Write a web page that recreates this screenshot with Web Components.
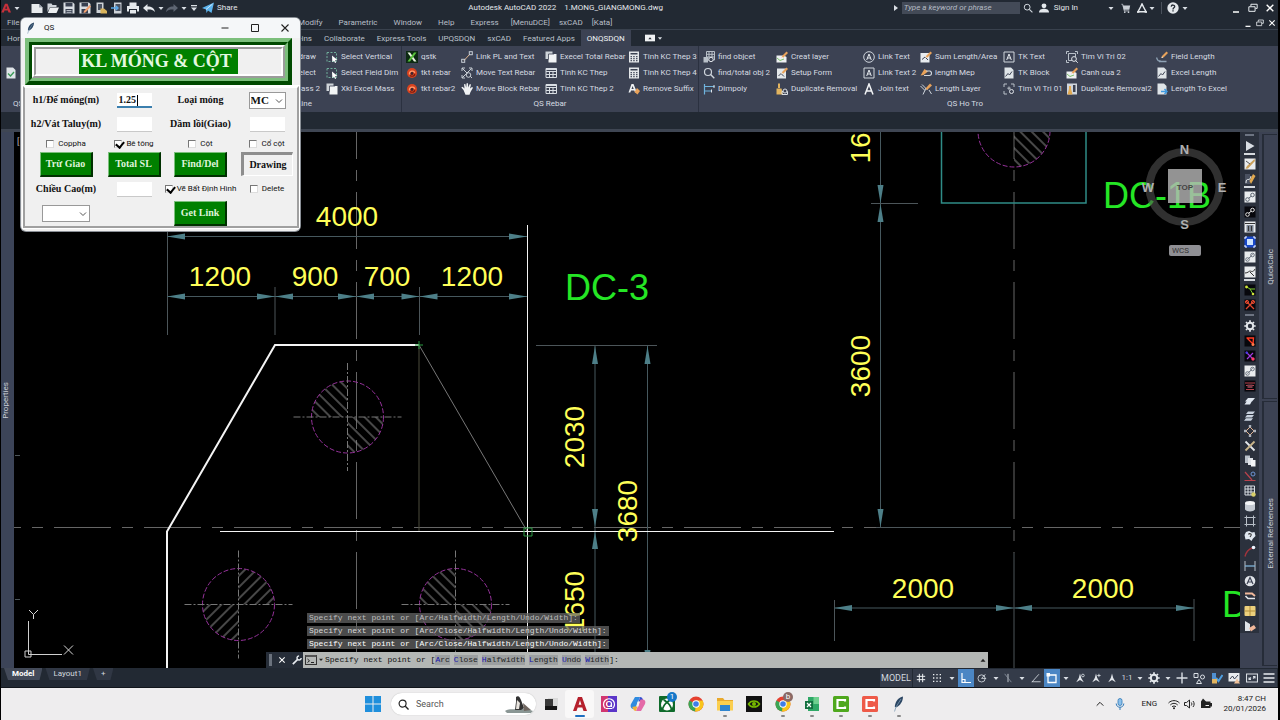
<!DOCTYPE html>
<html lang="en">
<head>
<meta charset="utf-8">
<title>Autodesk AutoCAD 2022</title>
<style>
html,body{margin:0;background:#000}
body{font-family:Roboto,"Noto Sans",sans-serif;font-size:8px;line-height:12px;color:#d3d8df}
</style>
</head>
<body>
<cad-app></cad-app>
<script>
const define = (name, css, render) => customElements.define(name, class extends HTMLElement {
  connectedCallback() {
    if (this.shadowRoot) return;
    const t = document.createElement('template');
    t.innerHTML = `<style>*{box-sizing:border-box}button,input,select{font:inherit;color:inherit;margin:0;padding:0;border:0;background:none;border-radius:0}a{color:inherit;text-decoration:none}${css}</style>${typeof render === 'function' ? render(this) : render}`;
    this.attachShadow({mode: 'open'}).append(t.content.cloneNode(true));
  }
});

/* ---------- icons, all on a 12 x 12 grid unless listed in BIG ---------- */
const L = '#d9dee4';
const st = (d, c = L, w = 1) => `<path d="${d}" fill="none" stroke="${c}" stroke-width="${w}"/>`;
const fl = (d, c = L) => `<path d="${d}" fill="${c}"/>`;
const pencil = fl('M10.500 0.500L12 2 7.500 6.500 5.500 7 6 5z', '#e8a25a') + fl('M5.500 7l.4-1.600 1.200 1.200z', '#fff');
const sheet = fl('M1.500 .5H8L10.500 3V11.500H1.500z', '#dfe4e8');
const calc = fl('M1 .5H11V11.500H1z', '#e4e7ea') + fl('M2.500 2H9.500V3.500H2.500z', '#3c4253') + [5,7,9].map(y => [2.5,5.2,8].map(x => fl(`M${x} ${y}h1.500v1.200h-1.500z`, '#4a5060')).join('')).join('');
const table = st('M1 1.500H11.500V10.500H1zM1 4.500H11.500M1 7.500H11.500M4.500 4V10.500M8 4V10.500') + fl('M1 1.500H11.500V3H1z');
const copy = fl('M.5 .5H7.500V8H.5z', '#cfd4d9') + fl('M3.500 3H11.500V11.500H3.500z', '#f2f4f5') + st('M3.500 8.500V3H9', '#3c4253', .8);
const dashSel = st('M1 1.500H10.500V10.500H1z', '#6fae9b').replace('/>', ' stroke-dasharray="2 1.500"/>') + fl('M6 4.500L11.500 9 9 9.200 10.200 11.500 9 12 8 9.800 6.300 11z', '#fff');
const rebar = '<circle cx="6" cy="6" r="5" fill="#d8431f"/>' + st('M3.500 7.500C3 4 8 2.800 8.800 5.800', '#ff9a6c', 1.3) + st('M4 8.500C6 10 9 9 8.700 7', '#7d1f10', 1.2) + '<circle cx="6" cy="6.500" r="1.400" fill="#3c2430"/>';
const tileW = '<rect x=".5" y=".5" width="11" height="11" fill="#e9ecee"/>';
const tileK = '<rect x=".5" y=".5" width="11" height="11" fill="#07070c"/>';
const chain = c => `<circle cx="3.500" cy="8.500" r="1.800" fill="none" stroke="${c}"/><circle cx="8.500" cy="4" r="1.800" fill="none" stroke="${c}"/>` + st('M4.800 7.200L7.200 5.200', c);
const chrome = '<circle cx="8" cy="8" r="7.500" fill="#e5402f"/><path d="M8 8L1.300 4.600A7.500 7.500 0 0 0 7.400 15.500z" fill="#3aa655"/><path d="M8 8H15.500A7.500 7.500 0 0 1 7 15.400z" fill="#f8c51c"/><path d="M8 8V4.600H14.700A7.500 7.500 0 0 1 15.500 8z" fill="#f8c51c"/><circle cx="8" cy="8" r="3.700" fill="#fff"/><circle cx="8" cy="8" r="2.800" fill="#3f7de8"/>';
const camt = c => `<rect width="16" height="16" rx="1.500" fill="${c}"/>` + st('M12 5.500V4H4.500V12H12V10.500', '#fff', 2.2);
const feather = fl('M12 .5C7.500 1.500 4 5.500 3.800 11L5.500 11.300C9 9.500 12 5.500 12 .5z', '#2b4663') + st('M3.500 15.500L5 11 10 3', '#7d9ab4', .8);
const compass = fl('M6 .5L7.500 6 10.500 11 6 8.500 1.500 11 4.500 6z', '#dfe3e8');

const ICONS = {
  alogo: fl('M4.800 1H7.800L12 11.500H9L8.200 9H4.200L3.400 11.500H.3zM5 6.800H7.400L6.200 3.200z', '#c7303a'),
  caret: fl('M3.500 5H8.500L6 8z'),
  caretbar: fl('M3 3H9V4.200H3zM3 5.500H9L6 9z'),
  play: fl('M2 1L10.500 6 2 11z'),
  tri: fl('M4 3L8 6 4 9z'),
  triup: fl('M3 8H9L6 4.500z', '#222'),
  newf: fl('M.5 2H8L11.500 5.500V11H.5z', '#e8ebee') + fl('M8 2V5.500H11.500z', '#9aa1ab'),
  open: fl('M.5 1.500H4.500L5.500 3H9.500V5H3L.5 10z', '#cfd4da') + fl('M3 5.500H12L9.500 11H.8z', '#eceff1'),
  save: fl('M.5 .5H10L11.500 2V11.500H.5z', '#d8dde2') + fl('M2.500 1H9.500V4.500H2.500zM2.500 7H9.500V11.500H2.500z', '#384050') + st('M3.500 8.500H8.500M3.500 10.300H8.500', '#d8dde2', .8),
  saveas: fl('M.5 .5H10L11.500 2V11.500H.5z', '#d8dde2') + fl('M2.500 1H9V4.500H2.500zM2.500 7H9V11.500H2.500z', '#384050') + fl('M10.500 3L12 4.500 6.500 10.500 4.500 11 5 9z', '#f0a070'),
  mob: fl('M1.500 .5H8.500V11H1.500z', '#cdd2d7') + fl('M3 2H7V8H3z', '#4b5362') + fl('M5.500 6.500H9L12 9V11.500H5.500z', '#d9b45c'),
  mob2: fl('M3 .5H10.500V11.500H3z', '#cdd2d7') + fl('M4.500 2H9.500V9H4.500z', '#4b5362') + st('M0 6H7M5 4L7 6 5 8', '#5aa8e8', 1.4),
  print: fl('M2.500 .5H9.500V4H2.500zM0 4H12V9.500H10V7H2V9.500H0zM3 8H9V11.500H3z', '#e4e8ec'),
  undo: fl('M0 6L4.500 2V4.600C9 4.600 11 6 12 10 10 7.800 8 7.400 4.500 7.500V10z', '#e4e8ec'),
  redo: fl('M12 6L7.500 2V4.600C3 4.600 1 6 0 10 2 7.800 4 7.400 7.500 7.500V10z', '#5d6572'),
  plane: fl('M0 6L12 .5 9.500 11 6 8.500 4.500 11 4 7.500z', '#5db4ee') + st('M4 7.500L10.500 2', '#fff', .7),
  mag: '<circle cx="5" cy="5" r="3.500" fill="none" stroke="#cfd5dc" stroke-width="1.200"/>' + st('M7.600 7.600L11.300 11.300', '#cfd5dc', 1.4),
  person: '<circle cx="6" cy="3.400" r="2.900" fill="#e4e8ec"/>' + fl('M0 11.500C0 8 3 7 6 7S12 8 12 11.500z', '#e4e8ec'),
  cart: fl('M2 3H11L10 8H3.500z', '#c9ced5') + st('M.5 1.500H2L4 9.500H10', '#c9ced5') + '<circle cx="4.500" cy="11" r="1" fill="#c9ced5"/><circle cx="9" cy="11" r="1" fill="#c9ced5"/>',
  adsk: st('M6 1.500L1.200 10.500H10.800z', '#e4e8ec', 1.7) + fl('M6 0L8 3H4zM0 9.500L3.500 11.800H0zM12 9.500V11.800H8.500z', '#e4e8ec'),
  help: '<circle cx="6" cy="6" r="5.700" fill="#e4e8ec"/>' + st('M4.200 4.600C4.400 2.400 7.800 2.600 7.700 4.600 7.600 5.900 6 5.800 6 7.400M6 8.300V9.600', '#222933', 1.3),
  min: st('M3 10H9', '#fff', 1.5),
  rest: st('M3.500 4V1.500H11V6.500H9M1 4.500H8.500V10H1z', '#e8ecf0', 1.2),
  close: st('M2 2L10 10M10 2L2 10', '#fff', 1.6),
  ribbtn: '<rect y="2" width="12" height="8" fill="#f0f2f4"/>' + fl('M4 7.500H8L6 5z', '#222933'),
  check: sheet + st('M3 6.500L5.500 9 9 5', '#3c9a58', 1.4),
  sel: dashSel, copy, rebar, table, calc,
  qstk: '<rect width="12" height="12" fill="#0c2a12"/>' + fl('M1.500 1.500H4L10.500 10.500H8z', '#e9f5e0') + fl('M8 1.500H10.500L4 10.500H1.500z', '#59c23c'),
  link: st('M3 9.500L9 3', '#e2b78e') + '<rect x=".7" y="8.300" width="3" height="3" fill="none" stroke="#c9cfd6"/><rect x="8.300" y=".7" width="3" height="3" fill="none" stroke="#c9cfd6"/>',
  move: st('M1 1L11 11M1 11L10.500 1.500M1 4V1H4M8 1H11V4M1 8V11H4', '#c9cfd6') + '<circle cx="7.500" cy="8" r="2.300" fill="#3c4253" stroke="#c9cfd6"/>',
  hand: fl('M2.500 7L.3 4.500 1.500 3.800 3.500 5.500 3 1.300 4.300 1 5.200 4.500 5.600.3H7L7.200 4.600 8.800 1 10 1.500 9 5.500 11 4 12 4.800 9.500 9 8.500 11.800H4.500z', '#f0f2f4'),
  suffix: fl('M3.500 1H5.500L9 9.500H7L6.300 7.500H3L2.300 9.500H.5zM3.500 6H5.700L4.600 3z', '#f0f2f4') + fl('M9 5L12 8 9.500 11.500 6.500 9z', '#e8a25a'),
  findo: st('M3.500 .5H11.500V9H3.500zM3.500 3.300H11.500M3.500 6H11.500M6 .5V9M9 .5V9', '#b9c0c9') + fl('M.5 6H5V11.500H.5z', '#b9c0c9') + '<circle cx="8" cy="8.500" r="2.200" fill="#3c4253" stroke="#dfe3e8"/>',
  dimp: st('M1.500 1V11.500M1.500 3.500H11.500M1.500 8H9', '#6fb3dd', 1.2) + st('M11 2V5M8.500 6.500V9.500', '#dfe3e8'),
  layer: fl('M.5 4.500H8L10.500 6V11.500H.5z', '#eef0f2') + st('M1 7L4 9.500 8 8', '#7cc06a') + pencil,
  form: fl('M1 1.500H10V11.500H1z', '#e3e7ea') + st('M2.500 9L5 6.500 8 9.500', '#3c4253') + pencil,
  broom: fl('M2 .5H4V5H2zM.5 5.500H5.500L7 11.500H.5z', '#e2b45f') + st('M6 8.500H11.500V11.500H6z', '#d9dee4') + '<circle cx="9" cy="8" r="2" fill="#3c4253" stroke="#d9dee4"/>',
  acirc: '<circle cx="6" cy="6" r="5.300" fill="none" stroke="#cfd5dc"/>' + st('M3.700 9L6 3 8.300 9M4.500 7H7.500', '#e6eaee'),
  abox: st('M1 1H11V11H1z', '#cfd5dc') + st('M3.700 9L6 3 8.300 9M4.500 7H7.500', '#e6eaee'),
  abig: st('M2 11.500L6 1 10 11.500M3.500 8H8.500', '#f2f4f6', 1.5),
  sumlen: fl('M.5 2H9.500V11.500H.5z', '#e9ecef') + st('M2 8.500L5 6 8 9', '#3c4253') + pencil,
  clip: fl('M4.500 2L8 4.500 3.500 8 .5 8.500z', '#e8a25a') + st('M6 4H10C12.200 5 12 8.500 9.500 8.500H4', '#cfd5dc', 1.2),
  lenlay: st('M.5 3L5 7.500M2 1.500L7.500 7M6 5L3 11.500M9 7L11.500 11', '#cfd5dc') + fl('M10 .5L12 2.500 7 7 5.500 5.500z', '#e8a25a'),
  doc: sheet + st('M2.500 9.500L5 6.500 6.500 8 9 4.500', '#3c4253'),
  scan: st('M1 4V1H4M8 1H11V4M1 8V11H4M6 3.500V7M4.300 5.200H7.700', '#b9c0c9') + '<circle cx="8.500" cy="8.500" r="2" fill="none" stroke="#dfe3e8"/>',
  scan2: st('M2.500 2.500H9.500V9.500H2.500zM.5 .5H3M9 .5H11.500M.5 11.500H3M.5 .5V3M11.500 .5V3M.5 9V11.500', '#b9c0c9') + '<circle cx="8" cy="8" r="2.400" fill="#3c4253" stroke="#dfe3e8"/>' + st('M9.500 9.500L11.800 11.800'),
  dup2: fl('M1 .5H11V11.500H1z', '#cfd5dc') + fl('M3 3H5V6L6.500 11.500H1.500L3 6z', '#e2a94f') + fl('M7 2H9.500V9H7z', '#3c4253'),
  field: st('M.5 6.500C1.500 10 3 10.500 4.500 9.500M3 10.500H10.500', '#8fa2b5', 1.3) + pencil,
  xls: sheet + st('M5 8.500H11M8.500 6L11 8.500 8.500 11', '#3f9ae0', 1.5),
  wrench: st('M1 11L6.500 5.500', '#e8ecf0', 2) + st('M11 3.500A2.500 2.500 0 1 1 8.500 1', '#e8ecf0', 1.7),
  prompt: '<rect x=".5" y="1.500" width="11" height="9" fill="none" stroke="#333"/><rect x=".5" y="1" width="11" height="2" fill="#555"/>' + st('M2.500 5L4.500 6.800 2.500 8.500M6 8.500H9', '#222'),
  /* side toolbar */
  s1: tileW + fl('M10.500 1L11 3 4 10.500 1.500 10.800 3 8z', '#caa05a') + st('M2 3L6 6', '#555'),
  s2: fl('M1 1H6V11H1z', '#4a5160') + st('M2 10C2 3 6 10 7 3', '#e3e7ea') + fl('M9 1L11.500 3 7 11 5.500 8z', '#e2a94f'),
  s3: tileW + chain('#5b6470'), s4: tileK + chain('#e8e8e8'),
  s5: tileW + fl('M2.500 4H9.500V11H2.500z', '#7b8594') + st('M1 2.500H11M4.500 5V10M7.500 5V10', '#333'),
  s6: '<rect x=".5" y=".5" width="11" height="11" fill="#1847c8"/><rect x="3" y="3" width="6" height="6" fill="#cfe4ff"/>' + st('M1 3V1H3M9 1H11V3M1 9V11H3M9 11H11V9', '#fff'),
  s7: tileW + st('M2 10L10 2', '#9aa0a8') + chain('#6d7581'),
  s8: tileW + st('M1 7C4 7 5 5 6 5S9 7 11 3M6 6L10 10', '#333'),
  s9: tileK + st('M2 2.500L6 5H11M6 5L9 10', '#7fd02c') + '<circle cx="2.500" cy="3" r="1.400" fill="#cfe23b"/><circle cx="9" cy="10" r="1.300" fill="#cfe23b"/>',
  s10: tileK + st('M2 2L10 10M10 2L2 10', '#e0472e', 1.3) + '<circle cx="3" cy="3" r="1.600" fill="none" stroke="#e0472e"/><circle cx="9" cy="3" r="1.600" fill="none" stroke="#e0472e"/>',
  gear: '<circle cx="6" cy="6" r="3.200" fill="none" stroke="#e4e8ec" stroke-width="2"/>' + st('M6 .3V2M6 10V11.700M.3 6H2M10 6H11.700M2 2L3.200 3.200M8.800 8.800L10 10M10 2L8.800 3.200M2 10L3.200 8.800', '#e4e8ec', 1.7),
  s11: tileK + st('M2.500 3H9.500L9 9.500M3 3L9 9', '#ff3b21', 1.4) + '<circle cx="9" cy="9.500" r="1.500" fill="#ff7a4a"/>',
  s12: tileK + st('M2 2L9 9M9 3L3 9', '#a33be0', 1.2) + '<circle cx="9" cy="9" r="1.700" fill="#ff3b6a"/><circle cx="2.800" cy="2.800" r="1.300" fill="#4a3be0"/>',
  s13: tileK + st('M1 3H11M2 9.500H10M2 5.500H10', '#b8424c') + fl('M3.500 4.500H8.500V8H3.500z', '#7b3c48'),
  s14: fl('M4 3H11L8 6.500H1zM3 6H8L6 9.500H.5z', '#dfe6ef'),
  s15: fl('M4 1.500H11L9 4H2zM3 5H10L8 7.500H1zM2 8.300H9L7 10.800H0z', '#c9d2de'),
  s16: st('M6 2L10 6 6 10 2 6z', '#e2b08a') + fl('M4.800 0H7.200V2.500H4.800zM4.800 9.500H7.200V12H4.800zM0 4.800H2.500V7.200H0zM9.500 4.800H12V7.200H9.500z', '#aab2bd'),
  s17: st('M1.500 1.500L10.500 10.500', '#e4e8ec', 1.8) + st('M10.500 1.500L1.500 10.500', '#c9b58a', 1.8),
  s18: fl('M1 .5H6V8H1z', '#b9c0c9') + fl('M4 3H9V10H4z', '#dfe3e8') + fl('M7 5H11.500V11.500H7z', '#f2f4f6'),
  s19: st('M1 2L8 10M.5 10.500H11.500', '#b8424c', 1.2) + '<circle cx="9" cy="4" r="2" fill="none" stroke="#6f94d4"/>',
  s20: st('M1 1H10.500V10H1zM1 4H10.500M1 7H10.500M4 1V10M7 1V10') + '<circle cx="9.500" cy="9.500" r="2.200" fill="#d8cf6a"/>',
  s21: fl('M1 3V9.500C2.500 12 9.500 12 11 9.500V3z', '#c3c9d1') + '<ellipse cx="6" cy="3" rx="5" ry="2" fill="#f2f4f6"/>',
  s22: st('M2.500 2.500H9.500V9.500H2.500zM.5 2.500H2.500V.5M9.500 .5V2.500H11.500M.5 9.500H2.500V11.500M9.500 11.500V9.500H11.500', '#b9c0c9'),
  s23: fl('M2 2L5 1 8 2.500 10.500 2 11.500 6 9 8.500 7.500 11 5 9 1.500 9.500 .5 5z', '#dfe6ef') + st('M4.500 4.500C5 3 8 3.500 7 5.500L6 7', '#333', 1.1),
  s24: st('M1 11.500C2 7 5 4 8.500 3', '#a3343c', 1.4) + '<circle cx="9.500" cy="2.500" r="1.800" fill="#eef4ff"/>',
  s25: st('M1 1V11M11 1V11', '#b9c0c9') + st('M1 6H11', '#7fb3d8', 1.3),
  s26: '<circle cx="6" cy="6" r="5.300" fill="#dfe3e8"/>' + st('M3 9L6 2.500 9 9M4 7H8', '#3c4253', 1.2),
  s27: st('M1 3.500H8L11 6', '#f0b89a', 2) + st('M11 8.500H4L1.500 6', '#e4e8ec', 1.6),
  s28: '<rect x=".5" y="1" width="11" height="10" rx="1" fill="#ecd07c"/>' + st('M6 1V11M.5 6H11.500', '#b28e3a'),
  s29: fl('M1 1L6 4V11H1z', '#dfe3e8') + fl('M5 8L10 5 12 8 7 11.500z', '#f0b89a'),
  /* status bar */
  grid: st('M4 1V11M8 1V11M1 4H11M1 8H11', '#eef1f4', 1.2),
  dots: [2,6,10].map(y => [2,6,10].map(x => fl(`M${x-.8} ${y-.8}h1.600v1.600h-1.600z`, '#eef1f4')).join('')).join(''),
  ortho: st('M2 1V10.500H11M2 7.500H5V10.500', '#fff', 1.2),
  polar: '<circle cx="5.500" cy="6.500" r="4.300" fill="none" stroke="#d9dee4"/>' + st('M5.500 6.500H11M5.500 6.500L10 1.500'),
  iso: st('M6 1V11') + st('M2 1L10 11', '#8b94a1'),
  angle: st('M1 11L9.500 1.500M1 10.500H11.500'),
  osnap: st('M2 3V10.500H10V3H4', '#fff', 1.3) + fl('M.5 1H4V4.500H.5z', '#fff'),
  ann1: compass + '<circle cx="9.500" cy="3" r="1.600" fill="none" stroke="#d9dee4"/>',
  ann2: compass + st('M9.500 1V5M7.500 3H11.500'), ann3: compass,
  plus: st('M6 .5V11.500M.5 6H11.500', L, 1.4),
  shapes: st('M1 1.500H5V5.500H1zM6 7.500L8.500 11.500H3.500z') + '<circle cx="9.500" cy="5" r="2" fill="none" stroke="#d9dee4"/>',
  hw: fl('M1 1H5V8H1z', '#4f8fd0') + st('M5 6L7.500 9 11.500 3', '#4f9fe0', 2) + fl('M1 7H6V11.500H1z', '#e2b45f'),
  perf: fl('M.5 1H11.500V9.500H.5z', '#e9ecef') + st('M2 7L4.500 4 6.500 7 10 3', '#3c4253') + fl('M9 6.500L12 11.500H6z', '#f0c19a'),
  clean: st('M.5 2H11.500V10H.5zM3 7.500L5 5.500M9 4.500L7 6.500M3 5.500V7.500H5M9 6.500V4.500H7', L, 1.1),
  ham: st('M.5 2H11.500M.5 6H11.500M.5 10H11.500', '#e8ecf0', 1.5),
  /* task bar, 16 grid */
  win: fl('M0 0H7.500V7.500H0zM8.500 0H16V7.500H8.500zM0 8.500H7.500V16H0zM8.500 8.500H16V16H8.500z', '#1f8fdc'),
  tview: fl('M5 2H15V13H5z', '#d9d9d9') + fl('M2 3H10V13H2z', '#3a3a3a') + fl('M2 10H14V14H2z', '#151515'),
  acad: fl('M6 1H10L15 15H11.500L10.300 11.500H5.700L4.500 15H1zM6.600 8.700H9.400L8 4.300z', '#b5202c'),
  cpt: '<rect width="16" height="16" fill="#5b35c8"/><rect width="7" height="16" fill="#d23670"/>' + '<path d="M4.500 12.500A5.500 5.500 0 1 1 11.500 12.500" fill="none" stroke="#fff" stroke-width="1.200"/><circle cx="8" cy="8" r="2.500" fill="none" stroke="#fff" stroke-width="1.200"/>' + st('M5 12.500H11M10.500 8V11', '#fff', 1.2),
  copilot: fl('M5 1H10L8 6 5.500 13H3C0 12 .5 9 1 8z', '#2f8be0') + fl('M10 1C13 1 12.500 4 14 5L8.500 6z', '#3450d0') + fl('M11 15H6L8 10 10.500 3.500H13C16 4 15.500 7 15 8z', '#e46aa8') + fl('M6 15C3 15 3.500 12 2 11L7.500 10z', '#f2b33c') + fl('M7.500 5.500L9.800 5.500 8.500 10.500H6.200z', '#f2f0ee'),
  xbox: '<rect width="16" height="16" rx="1" fill="#0f6b2b"/><circle cx="8" cy="8.500" r="6" fill="#fff"/>' + st('M3.500 13C5 9 7 7 8 6.500 9 7 11 9 12.500 13M4.500 4C6 4 7 5.500 8 6.500 9 5.500 10 4 11.500 4', '#0f6b2b', 1.8),
  chrome,
  folder: fl('M0 2H6L7.500 4H16V14H0z', '#e9a92c') + fl('M0 5H16V14.500H0z', '#fbcf4f') + fl('M3 9H13V15H3z', '#2f85cf'),
  nv: '<rect width="16" height="16" fill="#111"/>' + st('M2.500 8C5 4 11 4 13.500 8 11 12 5 12 2.500 8z', '#76b900', 1.5) + '<circle cx="8" cy="8" r="2" fill="#76b900"/>',
  excel: fl('M4 1H15V15H4z', '#2fa866') + fl('M9.500 1H15V8H9.500z', '#6fd08f') + fl('M1 5H9V13H1z', '#12703f') + st('M3 7L7 11M7 7L3 11', '#fff', 1.2),
  camg: camt('#4fa81d'), camr: camt('#ee5a48'), feather,
  chev: st('M2 8L6 4 10 8', '#222', 1.2),
  mic: '<rect x="4" y=".5" width="4" height="7" rx="2" fill="#8cc0ea" stroke="#2f78b8" stroke-width=".8"/>' + st('M2.200 5.500C2.200 10.500 9.800 10.500 9.800 5.500M6 9.300V12', '#2f78b8'),
  wifi: st('M.5 5C3.500 1.800 8.500 1.800 11.500 5M2.300 7C4.500 4.800 7.500 4.800 9.700 7M4 8.800C5 7.800 7 7.800 8 8.800', '#222') + '<circle cx="6" cy="10.300" r="1" fill="#222"/>',
  spk: st('M.5 4.500H2.500L5.500 2V10L2.500 7.500H.5zM7.300 4.500C8 5.500 8 6.500 7.300 7.500M9 3C10.500 5 10.500 7 9 9', '#222'),
  bat: fl('M1 3.500H10.500V5H12V8.500H10.500V10H1z', '#222') + fl('M3 .5L6 3.500 3.500 7 1 3.500z', '#222') + st('M5.500 7.500H9', '#eee'),
  feath12: '<g transform="scale(.75)">' + feather + '</g>',
  maxi: st('M2.500 2.500H9.500V9.500H2.500z', '#222'), mind: st('M2.500 6H9.500', '#222'), clsd: st('M2.500 2.500L9.500 9.500M9.500 2.500L2.500 9.500', '#222', 1.1),
  cdown: st('M3 4.500L6 7.500 9 4.500', '#555')
};
const BIG = new Set(['win','tview','acad','cpt','copilot','xbox','chrome','folder','nv','excel','camg','camr','feather']);
define('x-icon', ':host{display:block;flex:none;width:12px;height:12px}:host([s="16"]){width:16px;height:16px}:host([s="10"]){width:10px;height:10px}:host([s="8"]){width:8px;height:8px}svg{display:block;width:100%;height:100%}',
  el => { const n = el.getAttribute('name'), b = BIG.has(n) ? 16 : 12; return `<svg viewBox="0 0 ${b} ${b}" aria-hidden="true">${ICONS[n] || ''}</svg>`; });
const ib = (n, w, label, s = 12) => `<button type="button" style="width:${w}px" aria-label="${label}"><x-icon name="${n}" s="${s}"></x-icon></button>`;

/* ---------- title and menu ---------- */
define('title-bar', `:host{display:flex;align-items:center;height:16px;background:#222933;color:#e2e6ea}
button{flex:none;height:16px;display:flex;align-items:center;justify-content:center}
.qat{display:flex}.share{width:auto;padding:0 4px 0 2px}
h1{flex:1;margin:0;font:inherit;text-align:center;white-space:pre}
input{width:118px;height:12px;background:#434a57;padding:0 2px;font-style:italic;flex:none}
input::placeholder{color:#b4bac3;opacity:1}.sign{width:auto;padding:0 28px 0 2px}.sep{width:1px;height:12px;background:#4a515c;margin:0 3px 0 5px}.win{display:flex;margin-left:39px}`,
`<div class="qat">${ib('alogo',10,'Application menu',10)}${ib('caret',12,'Menu')}<span style="width:6px"></span>${[['newf','New'],['open','Open'],['save','Save'],['saveas','Save as'],['mob','Open from mobile'],['mob2','Save to mobile'],['print','Plot']].map(a=>ib(a[0],16,a[1])).join('')}${ib('undo',16,'Undo')}${ib('caret',7,'Undo list')}${ib('redo',16,'Redo')}${ib('caret',8,'Redo list')}${ib('caretbar',12,'Customize')}${ib('plane',15,'Send')}<button type="button" class="share">Share</button></div>
<h1>Autodesk AutoCAD 2022    1.MONG_GIANGMONG.dwg</h1>
<x-icon name="tri" s="12"></x-icon><input type="text" placeholder="Type a keyword or phrase" aria-label="Search help">
${ib('mag',16,'Search',10)}${ib('person',16,'Account',10)}<button type="button" class="sign">Sign In</button>${ib('caret',10,'Account menu')}${ib('cart',20,'Store',10)}${ib('adsk',12,'Autodesk',10)}${ib('caret',8,'Apps menu')}<span class="sep"></span>${ib('help',16,'Help')}${ib('caret',8,'Help menu')}
<div class="win">${ib('min',16,'Minimize')}${ib('rest',17,'Restore',10)}${ib('close',17,'Close',10)}</div>`);

define('menu-bar', `:host{display:flex;align-items:center;height:14px;padding-left:6px;background:#222933;border-bottom:1px solid #39414d;color:#b9bfc8}
nav{display:flex;flex:1}a{flex:none}.a,.b{display:flex}.a{gap:16px}.b{gap:9px;margin-left:12px}.file{width:291px}
div.w{display:flex}button{display:flex;justify-content:center;align-items:center;height:12px}`,
`<nav><a class="file" href="#">File</a><span class="a">${['Modify','Parametric','Window','Help','Express'].map(t=>`<a href="#">${t}</a>`).join('')}</span><span class="b">${['[MenuDCE]','sxCAD','[Kata]'].map(t=>`<a href="#">${t}</a>`).join('')}</span></nav><div class="w">${ib('min',12,'Minimize drawing',10)}${ib('rest',12,'Restore drawing',8)}${ib('close',12,'Close drawing',8)}</div>`);

define('ribbon-tabs', `:host{display:flex;align-items:stretch;height:16px;background:#222933;color:#bcc2cb;padding-left:6px}
button{flex:none;padding:2px 6px 0 6px;text-align:left}.home{padding-left:0;width:272px}.on{background:#3c4253;color:#eef1f4}
.r{display:flex;align-items:center;margin-left:14px}`,
`<button type="button" class="home">Home</button>${['Add-ins','Collaborate','Express Tools','UPQSDQN','sxCAD','Featured Apps'].map(t=>`<button type="button">${t}</button>`).join('')}<button type="button" class="on">ONQSDQN</button><span class="r"><x-icon name="ribbtn" s="10"></x-icon><x-icon name="caret" s="10"></x-icon></span>`);

define('ribbon-item', ':host{display:block;height:16px}button{display:flex;align-items:center;gap:3px;height:16px;white-space:nowrap;text-align:left}',
  el => `<button type="button"><x-icon name="${el.getAttribute('icon')}" s="12"></x-icon><slot></slot></button>`);
define('ribbon-panel', `:host{display:flex;flex-direction:column;flex:none;height:66px;padding-top:3px;border-right:1px solid #2b3140}
.c{display:flex;padding-left:4px;height:48px}footer{text-align:center;line-height:14px}`,
  `<div class="c"><slot></slot></div><footer><slot name="label"></slot></footer>`);
const col = (w, items) => `<div style="width:${w}px">${items.map(i => `<ribbon-item icon="${i[0]}">${i[1]}</ribbon-item>`).join('')}</div>`;
define('cad-ribbon', `:host{display:flex;height:66px;background:#3c4253;color:#d6dbe1}ribbon-panel>div{flex:none}.p0{width:286px}.p1{width:115px}.p2{width:297px}.p3{width:532px;border:0}.t{padding-left:3px;width:35px;line-height:16px}`,
`<ribbon-panel class="p0" style="border:0"><div style="padding-top:16px"><ribbon-item icon="check">Dim</ribbon-item></div><span slot="label" style="display:block;text-align:left;padding-left:12px">QS</span></ribbon-panel>
<ribbon-panel class="p1"><div class="t">Edraw<br>Select<br>Mass 2</div>${col(70,[['sel','Select Vertical'],['sel','Select Field Dim'],['copy','Xkl Excel Mass']])}<span slot="label" style="display:block;text-align:left;padding-left:10px">Line</span></ribbon-panel>
<ribbon-panel class="p2">${col(55,[['qstk','qstk'],['rebar','tkt rebar'],['rebar','tkt rebar2']])}${col(84,[['link','Link PL and Text'],['move','Move Text Rebar'],['hand','Move Block Rebar']])}${col(83,[['copy','Execel Total Rebar'],['table','Tinh KC Thep'],['table','Tinh KC Thep 2']])}${col(70,[['calc','Tinh KC Thep 3'],['calc','Tinh KC Thep 4'],['suffix','Remove Suffix']])}<span slot="label">QS Rebar</span></ribbon-panel>
<ribbon-panel class="p3">${col(73,[['findo','find objcet'],['mag','find/total obj 2'],['dimp','Dimpoly']])}${col(87,[['layer','Creat layer'],['form','Setup Form'],['broom','Duplicate Removal']])}${col(57,[['acirc','Link Text'],['abox','Link Text 2'],['abig','Join text']])}${col(83,[['sumlen','Sum Length/Area'],['clip','length Mep'],['lenlay','Length Layer']])}${col(63,[['abox','TK Text'],['doc','TK Block'],['scan','Tim Vi Tri 01']])}${col(90,[['scan2','Tim Vi Tri 02'],['layer','Canh cua 2'],['dup2','Duplicate Removal2']])}${col(75,[['field','Field Length'],['doc','Excel Length'],['xls','Length To Excel']])}<span slot="label">QS Ho Tro</span></ribbon-panel>`);

/* ---------- drawing ---------- */
const Q = {NW:'M0 0H-36A36 36 0 0 1 0-36z', SE:'M0 0H36A36 36 0 0 1 0 36z', NE:'M0 0V-36A36 36 0 0 1 36 0z', SW:'M0 0V36A36 36 0 0 1-36 0z'};
const pile = (x, y, a, b, h) => `<g transform="translate(${x} ${y})"><path d="${Q[a]}${Q[b]}" fill="url(#${h})"/><circle r="36" class="pur"/><path class="cl" d="M0-54V54M-54 0H54"/></g>`;
const arr = (x, y, d) => { const p = {r:`l-18-3v6z`, l:`l18-3v6z`, u:`l-3 18h6z`, d:`l-3-18h6z`}[d]; return `<path class="ar" d="M${x} ${y}${p}"/>`; };
const hd = (y, ...xs) => xs.slice(1).map((x, i) => `<path class="dl" d="M${xs[i]} ${y}H${x}"/>${arr(xs[i], y, 'l')}${arr(x, y, 'r')}`).join('');
const vt = (x, y, t) => `<text class="y" text-anchor="middle" transform="translate(${x} ${y}) rotate(-90)">${t}</text>`;
const ht = (x, y, t) => `<text class="y" text-anchor="middle" x="${x}" y="${y}">${t}</text>`;
define('cad-drawing', `:host{display:block;position:absolute;inset:0;overflow:hidden;background:#000}svg{display:block;width:100%;height:100%;fill:none}
text{font-family:"Liberation Sans Narrow","Liberation Sans",sans-serif}
.y{font-size:28px;fill:#ffff58}.g{font-size:36px;fill:#25e625}
.dl{stroke:#46585e;stroke-width:1}.ar{fill:#4d7f88}.ext{stroke:#4c5559}.pur{stroke:#96329b;stroke-dasharray:5 2}.cl{stroke:#777;stroke-dasharray:7 2 2 2}
.ax{stroke:#666;stroke-dasharray:57 11 11 11}.w{stroke:#f4f4f4}.n{font:bold 13px "Liberation Sans",sans-serif;fill:#b0b0b0;text-anchor:middle}`,
`<svg role="img" aria-label="Foundation drawing"><defs>
<pattern id="ha" width="8" height="8" patternUnits="userSpaceOnUse" patternTransform="rotate(-45)"><path d="M4 0V8" stroke="#8f8f8f"/></pattern>
<pattern id="hb" width="8" height="8" patternUnits="userSpaceOnUse" patternTransform="rotate(45)"><path d="M4 0V8" stroke="#8f8f8f"/></pattern></defs>
<g transform="translate(-14 -132)">
<path class="ax" d="M356.500 102V668M1014 102V553M-36 527.500H1241"/><path class="ext" d="M876 527.500H1011M1014 553V668M15 455.500H20M15 599.500H20"/>
<path class="ext" d="M167.500 232V335M275 287V335M419.500 287V335M536 345.500H657M871 203.500H918M834.500 600V641M1194 599V641"/>
${hd(236.5,167,527)}${hd(296.5,167,275,356,419.5,527)}${hd(608,834,1014,1194)}
<path class="dl" d="M595 345V668M647.500 345V668M880.500 132V527"/>
${arr(595,346,'u')}${arr(595,527,'d')}${arr(595,531,'u')}${arr(647.5,346,'u')}${arr(647.5,668,'d')}${arr(880.5,203,'d')}${arr(880.5,204,'u')}${arr(880.5,527,'d')}
<path d="M941.500 132V203H1086V132" stroke="#2f8c87" stroke-width="1.500"/>
${pile(347.5,417,'NW','SE','ha')}${pile(238.5,604.5,'NE','SW','hb')}${pile(455.5,604.5,'NW','SE','ha')}
<g transform="translate(1014 131)"><path d="${Q.SE}" fill="url(#ha)"/><circle r="36" class="pur"/></g>
<path d="M419 345L527 531" stroke="#777"/><path d="M419 345V531" stroke="#4c4c3c"/>
<path class="w" stroke-width="2" d="M167 668V531.500L275 345H419"/><path class="w" d="M527.500 225V668M220 531.500H834"/>
<path d="M524 528H532V536H524zM415 345H423M419 341V349" stroke="#2a9a42"/>
${ht(347,226,'4000')}${ht(220,286,'1200')}${ht(315,286,'900')}${ht(387,286,'700')}${ht(472,286,'1200')}${ht(923,598,'2000')}${ht(1103,598,'2000')}
${vt(584,437,'2030')}${vt(637,511,'3680')}${vt(584,602,'1650')}${vt(870,366,'3600')}${vt(870,148,'16')}
<text class="g" x="565" y="300">DC-3</text><text class="g" x="1103" y="208">DC-1B</text><text class="g" x="1222" y="617">D</text>
<path d="M28.500 621V654.500H62M25 651H31V657H25z" stroke="#d0d0d0"/><path d="M29 610L33.500 614.500 38 610M33.500 614.500V619M64 645.500L73 654.500M73 645.500L64 654.500" stroke="#d8d8d8"/>
<circle cx="1184.500" cy="187" r="35" stroke="#505050" stroke-opacity=".6" stroke-width="8"/>
<rect x="1168" y="169" width="34" height="34" fill="#b8b8b8" fill-opacity=".8"/>
<text class="n" x="1184.500" y="154">N</text><text class="n" x="1184.500" y="229">S</text><text class="n" x="1148" y="192">W</text><text class="n" x="1222" y="192">E</text><text class="n" x="1185" y="190" style="font-size:8px;fill:#444">TOP</text>
<rect x="1169" y="245" width="32" height="11" rx="2" fill="#8f8f94"/><text x="1172" y="253" style="font:8px Roboto,sans-serif;fill:#333">WCS</text>
<text x="17" y="144" style="font:9px Roboto,sans-serif;fill:#bbb">[</text>
</g></svg>`);

define('command-line', `:host{display:block;position:absolute;left:252px;right:252px;bottom:0;font-family:"Liberation Mono",monospace;font-size:8px}
.h{margin:0 0 3px 41px;padding:0;display:flex;flex-direction:column;align-items:flex-start;gap:3px}
.h div{height:10px;line-height:10px;padding:0 2px;background:rgba(100,100,100,.75);color:#d9d9d9;white-space:pre}.h div:first-child{color:#bdbdbd}.h div:last-child{color:#fff}
.b{display:flex;height:16px;background:#b4b7b5}.l{display:flex;align-items:center;width:37px;background:#262d38;padding-left:3px;gap:4px}.l i{width:3px;height:12px;background:#6b727d}
.l button{display:flex;width:12px;justify-content:center}.p{flex:1;display:flex;align-items:center;color:#111;white-space:pre;padding:0 0 0 2px}.k{background:#9c9fa0;height:10px;line-height:10px;margin-right:4px;color:#222}.k b{font-weight:400;color:#1616b0}.k:last-of-type{margin:0}.e{margin-left:auto}`,
`<div class="h"><div>Specify next point or [Arc/Halfwidth/Length/Undo/Width]:</div><div>Specify next point or [Arc/Close/Halfwidth/Length/Undo/Width]:</div><div>Specify next point or [Arc/Close/Halfwidth/Length/Undo/Width]:</div></div>
<div class="b"><div class="l"><i></i>${ib('close',12,'Close command line',8)}${ib('wrench',12,'Customize',10)}</div><div class="p"><x-icon name="prompt"></x-icon><x-icon name="triup" s="8" style="transform:rotate(180deg)"></x-icon><span>Specify next point or [</span>${['Arc','Close','Halfwidth','Length','Undo','Width'].map(k=>`<button type="button" class="k"><b>${k[0]}</b>${k.slice(1)}</button>`).join('')}<span>]:</span><x-icon class="e" name="triup" s="10"></x-icon></div></div>`);

define('side-label', ':host{display:flex;align-items:center;justify-content:center}span{writing-mode:vertical-rl;transform:rotate(180deg);white-space:nowrap;line-height:12px}', '<span><slot></slot></span>');
define('side-toolbar', `:host{display:flex;flex-direction:column;flex:none;width:20px;background:#3c4253}
.g{display:flex;flex-direction:column;background:#2b313d;margin-right:1px}.g.z{flex:0 1 313px}
button{flex:1 1 15px;min-height:0;display:flex;align-items:center;justify-content:center}.i{height:3px;margin:0 4px;border-top:2px solid #d5d9de}.hd{height:6px;display:flex}.hd:before{content:"";width:10px;height:2px;margin:2px 5px;background:#6d7482}`,
(() => { const b = a => a.map(n => `<button type="button" aria-label="Tool ${n}"><x-icon name="${n}"></x-icon></button>`).join('');
return `<div class="g"><span class="hd"></span>${b(['play'])}<span class="i"></span>${b(['s1','s2'])}<span class="i"></span>${b(['s3','s4','s5','s6','s7','s8'])}<span class="i"></span>${b(['s9','s10'])}</div>
<div class="g z"><span class="hd"></span>${b(['gear','s11','s12','s7','s13','s14','s15','s16','s17','s18','s19','s20','s21','s22','s23','s24','s25','s26','s27','s28','s29'])}</div>`; })());

define('cad-stage', `:host{display:flex;flex:1;min-height:536px;border-top:3px solid #3f4653}
.l{width:13px;background:#3c4458;flex:none;padding-right:3px}.m{position:relative;flex:1;min-width:0}.r{width:18px;flex:none;background:#3c4253;display:flex;flex-direction:column;padding:2px 1px 2px 2px;gap:2px}
.r side-label{border:1px solid #262c38;border-width:1px 0 1px 2px;flex:1}.x{color:#c9ced6}`,
`<side-label class="l x">Properties</side-label><div class="m"><cad-drawing></cad-drawing><command-line></command-line></div><side-toolbar></side-toolbar><div class="r x"><side-label>QuickCalc</side-label><side-label>External References</side-label></div>`);

define('status-bar', `:host{display:flex;height:20px;align-items:center;background:#222933;border-bottom:1px solid #11151b;padding-right:1px;flex:none}
button{height:18px;display:flex;align-items:center;justify-content:center;flex:none}.t{display:flex;flex:1;align-self:flex-start;padding-left:3px}.t button{height:12px;padding:0 8px;background:#303744;margin-right:3px;clip-path:polygon(0 0,100% 0,calc(100% - 3px) 100%,4px 100%)}.t .on{font-weight:700;color:#fff;background:#434a59}
.s{display:flex;gap:0}.s>*{background:#343b49}.s .on{background:#4b86c4}.m{width:32px;font-size:9px}`,
`<div class="t"><button type="button" class="on">Model</button><button type="button">Layout1</button><button type="button">+</button></div>
<div class="s"><button type="button" class="m">MODEL</button><span style="width:1px;background:none"></span>${[['grid',16],['dots',16],['caret',13],['ortho',16,1],['polar',16],['caret',11],['iso',14],['caret',13],['angle',16],['osnap',16,1],['caret',12],['ann1',16],['ann2',16],['ann3',16]].map(a=>a[2]?ib(a[0],a[1],a[0]).replace('<button','<button class="on"'):ib(a[0],a[1],a[0],a[0]==='caret'?12:10)).join('')}<button type="button" style="width:14px">1:1</button>${[['caret',12],['gear',16],['caret',12],['plus',16],['shapes',18],['hw',17],['perf',18],['clean',17],['ham',17]].map(a=>ib(a[0],a[1],a[0])).join('')}</div>`);

define('task-bar', `:host{display:flex;align-items:center;height:32px;flex:none;background:#eeedee;color:#222;padding-left:363px}
button{position:relative;height:28px;width:29px;flex:none;display:flex;align-items:center;justify-content:center}.st{width:18px}
label{display:flex;align-items:center;gap:7px;width:145px;height:22px;margin:0 0 0 9px;padding-left:7px;border-radius:11px;background:#fff;box-shadow:0 0 1px #aaa;overflow:hidden;flex:none}
input{width:80px;flex:1;font-size:9px;outline:0}input::placeholder{color:#555;opacity:1}.pg{width:30px;height:18px;flex:none;margin-right:2px}
.run:after{content:"";position:absolute;bottom:1px;width:4px;height:2px;border-radius:1px;background:#888}.act{background:#f9f8f8;border-radius:3px}.act:after{width:10px;background:#1f6fc0}
.bd{position:absolute;left:15px;top:2px;width:10px;height:10px;border-radius:5px;background:#1677c8;color:#fff;line-height:10px}.bd.q{background:#8a6a66}
.tray{display:flex;align-items:center;margin-left:auto;padding-right:12px}.tray button{width:16px}.tray .e{width:34px}.tray .m{width:24px}time{margin-left:9px;text-align:right;line-height:10px}`,
`<button type="button" class="st" aria-label="Start"><x-icon name="win" s="16"></x-icon></button>
<label><svg width="11" height="11" viewBox="0 0 12 12"><circle cx="5" cy="5" r="3.800" fill="none" stroke="#222" stroke-width="1.300"/><path d="M8 8L11.500 11.500" stroke="#222" stroke-width="1.500"/></svg><input type="search" placeholder="Search" aria-label="Search"><svg class="pg" viewBox="0 0 30 18"><path d="M1 16C6 13 10 15 14 14S24 14 29 16L27 18H3z" fill="#8a9694"/><path d="M12 2C15 0 16 3 17 5L20 13 17 15H11L12 7z" fill="#333"/><path d="M13 5L16 8 15 14H12z" fill="#e8e4de"/><path d="M19 8L27 15 20 16z" fill="#6f6660"/></svg></label>
${[['tview',''],['acad','run act'],['cpt',''],['copilot',''],['xbox','','1'],['chrome',''],['folder','run'],['nv',''],['chrome','run','b'],['excel','run'],['camg','run'],['camr','run'],['feather','run']].map(a=>`<button type="button" class="${a[1]}" aria-label="${a[0]}"><x-icon name="${a[0]}" s="16"></x-icon>${a[2]?`<span class="bd ${a[2]==='b'?'q':''}">${a[2]}</span>`:''}</button>`).join('')}
<div class="tray">${ib('chev',16,'Hidden icons',10)}<button type="button" class="m" aria-label="Microphone"><x-icon name="mic"></x-icon></button><button type="button" class="e">ENG</button>${ib('wifi',16,'Network')}${ib('spk',16,'Volume')}${ib('bat',16,'Battery')}<time datetime="2026-01-20T20:47">8:47 CH<br>20/01/2026</time></div>`);

/* ---------- QS tool window ---------- */
const chk = (id, t, on) => `<label class="c" for="${id}"><input type="checkbox" id="${id}"${on ? ' checked' : ''}>${t}</label>`;
define('qs-dialog', `:host{display:block;position:absolute;left:21px;top:18px;width:279px;height:213px;background:#f0f0f0;border-radius:5px;overflow:hidden;color:#111;box-shadow:0 0 0 1px #8a8f96}
header{display:flex;align-items:center;height:20px;background:#f5f7f9;padding-left:4px;gap:7px}header span{flex:1}header button{width:30px;display:flex;justify-content:center;height:18px;align-items:center}header x-icon{flex:none}header button{margin-left:-7px}header button+button{margin-left:-7px}
.g1{margin:0 8px 0 4px;border:4px solid;border-color:#7cbf7c #004a00 #004a00 #7cbf7c}.g2{border:3px solid;border-color:#004a00 #7cbf7c #7cbf7c #004a00}
.g3{border:2px solid;border-color:#fff #9b9b9b #9b9b9b #fff}.g4{border:2px solid;border-color:#9b9b9b #fff #fff #9b9b9b;height:29px;display:flex;align-items:center;justify-content:center;background:#f0f0f0}
h2{margin:0;background:#008000;color:#e4f8e0;font:bold 18px/25px "Liberation Serif",serif;padding:0 6px 0 2px}
form{display:grid;grid-template-columns:82px 54px 79px 54px;grid-template-rows:24px 24px 15px 26px 24px 24px;place-items:center;margin:1px 1px 0 2px;border:2px solid;border-color:#fff #a0a0a0 #a0a0a0 #a0a0a0;outline:1px solid #fff;height:142px;font:bold 10px/12px "Liberation Serif",serif;white-space:nowrap}
.i{width:35px;height:15px;background:#fff;border-bottom:1px solid #c9c9c9;padding:0 2px;outline:0}.f{position:relative;display:flex}.f .i{border-bottom:2px solid #3b7fae}.f i{position:absolute;left:20px;top:2px;width:1px;height:11px;background:#000}
.c{display:flex;align-items:center;gap:4px;font:8px/12px Roboto,"Noto Sans",sans-serif}.c input{appearance:none;width:8px;height:8px;border:1px solid #777;border-color:#777 #ddd #ddd #777;background:#fff;position:relative}.c input:checked:after{content:"";position:absolute;left:2px;top:-1px;width:4px;height:6px;border:solid #000;border-width:0 2px 2px 0;transform:rotate(40deg)}
.b{width:53px;height:25px;background:#008000;color:#dff3da;border:solid;border-width:1px 2px 2px 1px;border-color:#7cbf7c #003000 #003000 #7cbf7c}.d{background:#f0f0f0;color:#111;width:52px;height:24px;border-width:3px 1px 1px 3px;border-color:#8e8e8e #fff #fff #8e8e8e}
.s{position:relative}.s select{appearance:none;display:block;width:37px;height:17px;background:#fff;border:1px solid #999;padding-left:1px;font-size:11px}.s.w select{width:48px}.s x-icon{position:absolute;right:1px;top:3px;pointer-events:none}`,
`<header><x-icon name="feath12"></x-icon><span>QS</span><button type="button" aria-label="Minimize"><x-icon name="mind"></x-icon></button><button type="button" aria-label="Maximize"><x-icon name="maxi"></x-icon></button><button type="button" aria-label="Close"><x-icon name="clsd"></x-icon></button></header>
<div class="g1"><div class="g2"><div class="g3"><div class="g4"><h2>KL MÓNG &amp; CỘT</h2></div></div></div></div>
<form onsubmit="return false"><label for="h1">h1/Đế móng(m)</label><span class="f"><input class="i" id="h1" type="text" value="1.25"><i></i></span><label for="lm">Loại móng</label><span class="s"><select id="lm"><option>MC</option></select><x-icon name="cdown"></x-icon></span>
<label for="h2">h2/Vát Taluy(m)</label><input class="i" id="h2" type="text"><label for="dl">Dầm lồi(Giao)</label><input class="i" id="dl" type="text">
${chk('k1','Coppha')}${chk('k2','Bê tông',1)}${chk('k3','Cột')}${chk('k4','Cổ cột')}
<button type="button" class="b">Trừ Giao</button><button type="button" class="b">Total SL</button><button type="button" class="b">Find/Del</button><button type="button" class="b d">Drawing</button>
<label for="cc">Chiều Cao(m)</label><input class="i" id="cc" type="text">${chk('k5','Vẽ Bất Định Hình',1)}${chk('k6','Delete')}
<span class="s w"><select aria-label="Option"><option></option></select><x-icon name="cdown"></x-icon></span><span></span><button type="button" class="b">Get Link</button></form>`);

define('cad-app', `:host{display:flex;flex-direction:column;position:relative;min-height:100vh;box-sizing:border-box;padding:0 2px 0 1px;background:#000}.gap{height:17px;background:#222933}`,
`<title-bar></title-bar><menu-bar></menu-bar><ribbon-tabs></ribbon-tabs><cad-ribbon></cad-ribbon><div class="gap"></div><cad-stage></cad-stage><status-bar></status-bar><task-bar></task-bar><qs-dialog></qs-dialog>`);
</script>
</body>
</html>
